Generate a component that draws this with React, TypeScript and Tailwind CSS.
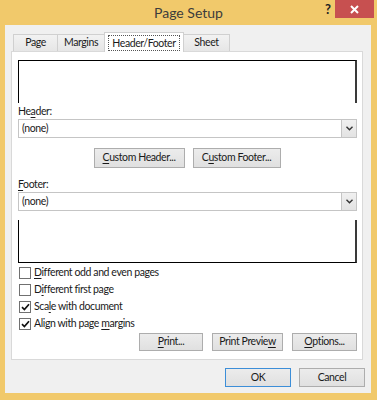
import * as React from "react";

const FONT = "font-['Lato','Noto_Sans',sans-serif]";
const TXT = "text-[10.5px] tracking-[-0.4px] text-[#1a1a1a]";

function Key({ children }: { children: React.ReactNode }) {
  return <span className="underline underline-offset-[2px] decoration-[1px]">{children}</span>;
}

function Tab({ label, w, selected }: { label: string; w: string; selected?: boolean }) {
  if (selected)
    return (
      <div className={`relative z-10 -ml-px ${w} h-[20px] border border-b-0 border-[#d0d0d0] bg-white flex items-start justify-center pt-[2px]`}>
        <span className={`border border-dotted border-[#555] px-[3px] leading-[14px] ${TXT}`}>{label}</span>
      </div>
    );
  return (
    <div className={`-ml-px first:ml-0 ${w} h-[18px] border border-[#d0d0d0] bg-gradient-to-b from-[#f2f2f2] to-[#e6e6e6] flex items-center justify-center ${TXT}`}>
      {label}
    </div>
  );
}

function Select() {
  return (
    <div className="h-[19px] border border-[#c5c5c5] bg-white flex items-stretch">
      <div className={`flex-1 pl-[3px] leading-[17px] ${TXT}`}>(none)</div>
      <div className="w-[15px] border-l border-[#c5c5c5] bg-gradient-to-b from-[#f0f0f0] to-[#e3e3e3] flex items-center justify-center">
        <svg width="7" height="5" viewBox="0 0 7 5">
          <polyline points="0.5,0.8 3.5,3.8 6.5,0.8" fill="none" stroke="#333" strokeWidth="1.4" />
        </svg>
      </div>
    </div>
  );
}

function Button({
  children,
  w,
  primary,
}: {
  children: React.ReactNode;
  w: string;
  primary?: boolean;
}) {
  return (
    <div
      className={`${w} border ${
        primary ? "border-[#3c8ed8]" : "border-[#adadad]"
      } bg-gradient-to-b from-[#ececec] to-[#e0e0e0] flex items-center justify-center ${TXT}`}
    >
      {children}
    </div>
  );
}

function Check({ checked, children }: { checked?: boolean; children: React.ReactNode }) {
  return (
    <div className="h-[17px] flex items-center gap-[3px]">
      <div className="w-[12px] h-[12px] border border-[#707070] bg-white flex items-center justify-center">
        {checked && (
          <svg width="9" height="8" viewBox="0 0 9 8">
            <path d="M1 4.2 L3.4 6.6 L8 1.2" fill="none" stroke="#111" strokeWidth="1.7" />
          </svg>
        )}
      </div>
      <span className={TXT}>{children}</span>
    </div>
  );
}

export default function App() {
  return (
    <div className={`w-[377px] h-[400px] bg-[#f1c96b] flex flex-col ${FONT}`}>
      {/* title bar */}
      <div className="h-[25px] flex items-start">
        <div className="w-[67px]" />
        <div className="flex-1 text-center text-[14px] leading-[26px] text-[#3c3c3c]">Page Setup</div>
        <div className="w-[67px] flex items-start">
          <div className="w-[25px] text-right pr-[4px] text-[13px] font-bold leading-[19px] text-[#222]">?</div>
          <div className="w-[39px] h-[18px] bg-[#c75050] flex items-center justify-center">
            <svg width="9" height="9" viewBox="0 0 9 9">
              <path d="M1 1 L8 8 M8 1 L1 8" stroke="#fff" strokeWidth="2" />
            </svg>
          </div>
        </div>
      </div>

      {/* body */}
      <div className="ml-[5px] mr-[6px] mb-[7px] flex-1 bg-[#f0f0f0] flex flex-col pl-[6px] pr-[8px] pt-[8px]">
        <div className="flex items-end h-[19px] pl-[2px]">
          <Tab label="Page" w="w-[45px]" />
          <Tab label="Margins" w="w-[48px]" />
          <Tab label="Header/Footer" w="w-[80px]" selected />
          <Tab label="Sheet" w="w-[47px]" />
        </div>

        <div className="-mt-px h-[309px] border border-[#d9d9d9] bg-white flex flex-col pl-[6px] pr-[5px] pt-[8px]">
          {/* header preview */}
          <div className="h-[43px] border-t border-l border-black border-r-2 border-r-[#3a3a3a]" />
          <div className={`h-[16px] leading-[16px] ${TXT}`}>
            He<Key>a</Key>der:
          </div>
          <Select />
          <div className="mt-[10px] h-[20px] flex justify-center gap-[8px] pr-[1px]">
            <Button w="w-[91px]">
              <Key>C</Key>ustom Header...
            </Button>
            <Button w="w-[88px]">
              C<Key>u</Key>stom Footer...
            </Button>
          </div>
          <div className={`mt-[8px] h-[16px] leading-[16px] ${TXT}`}>
            <Key>F</Key>ooter:
          </div>
          <Select />
          <div className="mt-[9px] h-[43px] border-l border-b border-black border-r-2 border-r-[#3a3a3a]" />

          <div className="mt-[1px] flex flex-col pl-[1px]">
            <Check>
              <Key>D</Key>ifferent odd and even pages
            </Check>
            <Check>
              D<Key>i</Key>fferent first page
            </Check>
            <Check checked>
              Sca<Key>l</Key>e with document
            </Check>
            <Check checked>
              Align with page <Key>m</Key>argins
            </Check>
          </div>

          <div className="mt-[1px] h-[18px] flex justify-end gap-[9px]">
            <Button w="w-[64px]">
              <Key>P</Key>rint...
            </Button>
            <Button w="w-[71px]">
              Print Previe<Key>w</Key>
            </Button>
            <Button w="w-[65px]">
              <Key>O</Key>ptions...
            </Button>
          </div>
        </div>

        <div className="mt-[8px] h-[19px] flex justify-end gap-[8px] -mr-[2px]">
          <Button w="w-[66px]" primary>
            OK
          </Button>
          <Button w="w-[66px]">Cancel</Button>
        </div>
      </div>
    </div>
  );
}
